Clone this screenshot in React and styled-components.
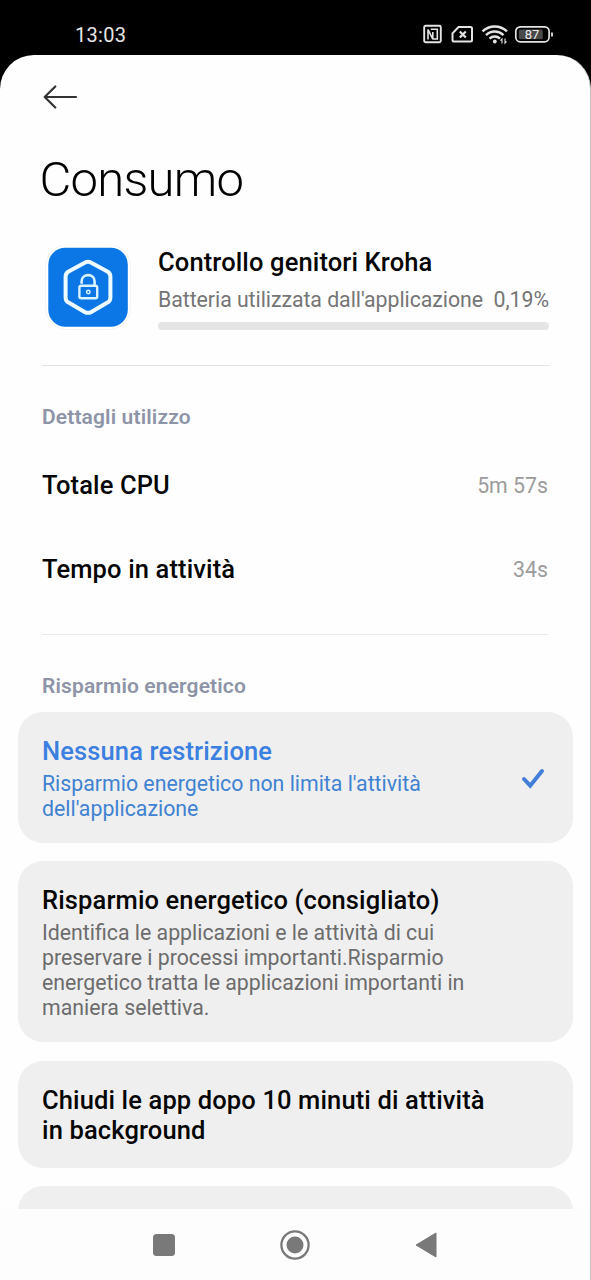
import styled, { createGlobalStyle } from 'styled-components';

const GlobalStyle = createGlobalStyle`
  * {
    box-sizing: border-box;
  }

  body {
    margin: 0;
    background: #000;
    font-family: Roboto, sans-serif;
  }
`;

const Phone = styled.div`
  width: 591px;
  height: 1280px;
  display: flex;
  flex-direction: column;
  overflow: hidden;
  background: #000;
`;

const StatusBar = styled.header`
  flex: none;
  height: 55px;
  padding: 14px 38px 0 75px;
  display: flex;
  justify-content: space-between;
  align-items: center;
  color: #e6e6e6;
`;

const Clock = styled.span`
  font-size: 20px;
  letter-spacing: 0.3px;
`;

const Screen = styled.main`
  flex: 1;
  min-height: 0;
  display: flex;
  flex-direction: column;
  overflow: hidden;
  border-right: 1px solid #c4c4c4;
  border-radius: 34px 34px 0 0;
  background: #fefefe;
`;

const BackBar = styled.div`
  flex: none;
  height: 96px;
  padding: 30px 0 0 42px;
`;

const PageTitle = styled.h1`
  flex: none;
  height: 58px;
  margin: 0 0 36px;
  padding-left: 39.5px;
  font-size: 49px;
  font-weight: 300;
  letter-spacing: -0.75px;
  line-height: 58px;
  color: #000;
`;

const AppInfo = styled.section`
  flex: none;
  height: 121px;
  margin: 0 41px 0 42px;
  display: flex;
  gap: 26px;
  border-bottom: 1px solid #e2e2e2;
`;

const AppText = styled.div`
  flex: 1;
  padding-top: 2px;
`;

const ItemTitle = styled.h3`
  margin: 0;
  font-size: 25.5px;
  font-weight: 500;
  letter-spacing: 0.13px;
  line-height: 30px;
  color: ${({ $active }) => ($active ? '#3b80e0' : '#060606')};
`;

const UsageLine = styled.div`
  display: flex;
  justify-content: space-between;
  margin: 10px 0;
  font-size: 21.3px;
  letter-spacing: -0.05px;
  line-height: 25px;
  white-space: nowrap;
  color: #757575;
`;

const UsageBar = styled.div`
  height: 8px;
  border-radius: 4px;
  background: #e5e5e5;
`;

const Details = styled.section`
  flex: none;
  height: 269px;
  margin: 0 42px;
  padding-top: 39px;
  border-bottom: 1px solid #e9e9e9;
`;

const SectionLabel = styled.h2`
  margin: 0;
  font-size: 21px;
  font-weight: 600;
  letter-spacing: 0.13px;
  line-height: 25px;
  color: #8e94a8;
`;

const DetailRow = styled.div`
  height: 84px;
  display: flex;
  justify-content: space-between;
  align-items: center;
`;

const DetailList = styled.div`
  padding-top: 13px;
`;

const DetailValue = styled.span`
  font-size: 21.3px;
  color: #9b9b9b;
`;

const Saver = styled.section`
  flex: 1;
  min-height: 0;
  padding: 39px 17px 0 18px;
  overflow: hidden;

  ${SectionLabel} {
    margin: 0 0 13px 24px;
  }
`;

const OptionList = styled.div`
  display: flex;
  flex-direction: column;
  gap: 18.3px;
`;

const Option = styled.div`
  display: flex;
  justify-content: space-between;
  align-items: center;
  min-height: 107px;
  padding: 24px 28px 22px 24px;
  border-radius: 25px;
  background: #efefef;
`;

const OptionText = styled.div`
  width: 450px;
`;

const OptionNote = styled.p`
  width: 430px;
  margin: 5px 0 0;
  font-size: 21.3px;
  line-height: 25px;
  color: ${({ $active }) => ($active ? '#3f82d2' : '#6c6c6c')};
`;

const NavBar = styled.nav`
  flex: none;
  height: 71px;
  padding: 0 152px;
  display: flex;
  justify-content: space-between;
  align-items: center;
  background: #fdfdfd;
`;

const options = [
  {
    title: 'Nessuna restrizione',
    note: "Risparmio energetico non limita l'attività dell'applicazione",
    active: true,
  },
  {
    title: 'Risparmio energetico (consigliato)',
    note: 'Identifica le applicazioni e le attività di cui preservare i processi importanti.Risparmio energetico tratta le applicazioni importanti in maniera selettiva.',
  },
  { title: 'Chiudi le app dopo 10 minuti di attività in background' },
];

const StatusIcons = () => (
  <svg width="130" height="22" viewBox="0 0 130 22" fill="none" stroke="#e4e4e4">
    {/* nfc */}
    <rect x="1.2" y="1.7" width="16.6" height="16.6" rx="1.5" strokeWidth="1.9" />
    <path d="M5 15.5V5.5l4.8 9.7V8M7.8 5.2h6.5V15H10" strokeWidth="1.6" />
    {/* no sim */}
    <path d="M35.5 3h12A1.5 1.5 0 0 1 49 4.500V16a1.500 1.500 0 0 1-1.500 1.500H31a1.500 1.500 0 0 1-1.500-1.500V9.300z" strokeWidth="2" />
    <path d="m36.8 7.5 6 6m0-6-6 6" strokeWidth="2.2" />
    {/* wifi */}
    <path d="M59.5 7.4c7-6.500 17.500-6.500 24.500 0" strokeWidth="2.5" />
    <path d="M63 11.1c5-4.700 12.500-4.700 17.500 0" strokeWidth="2.5" />
    <path d="M66.5 14.6c3-2.800 7.500-2.800 10.500 0" strokeWidth="2.5" />
    <circle cx="71.8" cy="17.5" r="1.9" fill="#e4e4e4" stroke="none" />
    <path d="M79 19.5V15l-1.5 1.7M82 14.500V19l1.500-1.700" strokeWidth="1.1" />
    {/* battery */}
    <rect x="92.8" y="2.8" width="33.3" height="15" rx="4.5" strokeWidth="1.7" />
    <rect x="95.8" y="5.5" width="24" height="9.8" rx="1.5" fill="#4a4a4a" stroke="none" />
    <path d="M129 8.5v4" strokeWidth="1.8" />
    <text x="109" y="15" textAnchor="middle" fill="#ededed" stroke="none" fontSize="13" fontWeight="400">
      87
    </text>
  </svg>
);

const BackIcon = () => (
  <svg width="36" height="24" viewBox="0 0 36 24" fill="none" stroke="#333" strokeWidth="2.2" strokeLinecap="round" strokeLinejoin="round">
    <path d="M34 12H2.7M13.3 1.5 2.7 12l10.6 10.5" />
  </svg>
);

const AppIcon = () => (
  <svg width="90" height="88" viewBox="0 0 90 88" fill="none">
    <rect x="3.5" y="-0.5" width="85" height="85" rx="22" fill="#fff" stroke="#f1f3f4" />
    <rect x="6.3" y="2.7" width="79.5" height="79" rx="17" fill="#0b77e6" />
    <path
      d="M42.7 17.8q3.3-1.9 6.6 0l16.100 8.600q3 1.700 3 5.200v20.800q0 3.500-3 5.200l-16.100 9.300q-3.300 1.900-6.600 0l-16.100-9.300q-3-1.700-3-5.200V31.600q0-3.500 3-5.200z"
      stroke="#edfaff"
      strokeWidth="4"
    />
    <rect x="37.4" y="40.8" width="17.8" height="12.4" rx="1.8" stroke="#d9f3ff" strokeWidth="2.4" />
    <path d="M39.6 38.8v-2.500c0-8.200 13-8.200 13 0v4" stroke="#d9f3ff" strokeWidth="2.6" />
    <circle cx="46.3" cy="47" r="1.7" stroke="#d9f3ff" strokeWidth="1.5" />
  </svg>
);

const CheckIcon = () => (
  <svg width="24" height="22" viewBox="0 0 24 22" fill="none" stroke="#437fd8" strokeWidth="4" strokeLinecap="round">
    <path d="m3 11 6.2 6.7L21 3" />
  </svg>
);

const App = () => (
  <>
    <GlobalStyle />
    <Phone>
      <StatusBar>
        <Clock>13:03</Clock>
        <StatusIcons />
      </StatusBar>
      <Screen>
        <BackBar>
          <BackIcon />
        </BackBar>
        <PageTitle>Consumo</PageTitle>
        <AppInfo>
          <AppIcon />
          <AppText>
            <ItemTitle>Controllo genitori Kroha</ItemTitle>
            <UsageLine>
              <span>Batteria utilizzata dall'applicazione</span>
              <span>0,19%</span>
            </UsageLine>
            <UsageBar />
          </AppText>
        </AppInfo>
        <Details>
          <SectionLabel>Dettagli utilizzo</SectionLabel>
          <DetailList>
            <DetailRow>
              <ItemTitle>Totale CPU</ItemTitle>
              <DetailValue>5m 57s</DetailValue>
            </DetailRow>
            <DetailRow>
              <ItemTitle>Tempo in attività</ItemTitle>
              <DetailValue>34s</DetailValue>
            </DetailRow>
          </DetailList>
        </Details>
        <Saver>
          <SectionLabel>Risparmio energetico</SectionLabel>
          <OptionList>
            {options.map(({ title, note, active }) => (
              <Option key={title}>
                <OptionText>
                  <ItemTitle $active={active}>{title}</ItemTitle>
                  {note && <OptionNote $active={active}>{note}</OptionNote>}
                </OptionText>
                {active && <CheckIcon />}
              </Option>
            ))}
            <Option />
          </OptionList>
        </Saver>
        <NavBar>
          <svg width="24" height="24" viewBox="0 0 24 24">
            <rect x="1" y="1" width="22" height="22" rx="3.5" fill="#797979" />
          </svg>
          <svg width="32" height="32" viewBox="0 0 32 32">
            <circle cx="16" cy="16" r="13.6" fill="none" stroke="#797979" strokeWidth="2.3" />
            <circle cx="16" cy="16" r="8.5" fill="#797979" />
          </svg>
          <svg width="24" height="28" viewBox="0 0 24 28">
            <path d="M22 2v24L2 14z" fill="#797979" stroke="#797979" strokeLinejoin="round" />
          </svg>
        </NavBar>
      </Screen>
    </Phone>
  </>
);

export default App;
